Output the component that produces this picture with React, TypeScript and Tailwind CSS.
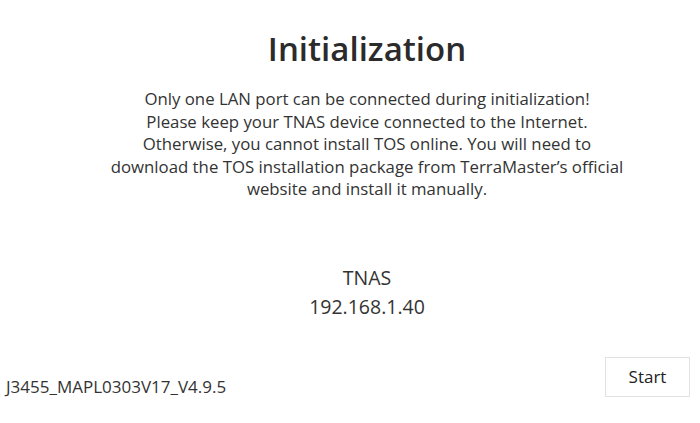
import React from "react";

export default function App() {
  return (
    <main
      className="flex h-[423px] w-[700px] flex-col bg-white text-[#333333]"
      style={{ fontFamily: '"Open Sans", "Noto Sans", sans-serif' }}
    >
      <div className="pl-[34px]">
        {/* Header */}
        <h1 className="mt-[27px] text-center text-[33px] font-semibold leading-[44px] text-[#2b2b2b]">Initialization</h1>

        {/* Notice */}
        <p className="mt-[17px] text-center text-[16.8px] leading-[22.6px]">
          Only one LAN port can be connected during initialization!
          <br />
          Please keep your TNAS device connected to the Internet.
          <br />
          Otherwise, you cannot install TOS online. You will need to
          <br />
          download the TOS installation package from TerraMaster’s official
          <br />
          website and install it manually.
        </p>

        {/* Device */}
        <div className="mt-[62px] text-center text-[19.5px] leading-[29px]">
          <div>TNAS</div>
          <div>192.168.1.40</div>
        </div>
      </div>

      {/* Footer */}
      <div className="mt-[33px] flex items-center justify-between pl-[6px] pr-[10px]">
        <span className="mt-[20px] text-[17px]">J3455_MAPL0303V17_V4.9.5</span>
        <button className="h-[40px] w-[85px] border border-[#e2e2e2] bg-white text-[17px] text-[#222]">Start</button>
      </div>
    </main>
  );
}
